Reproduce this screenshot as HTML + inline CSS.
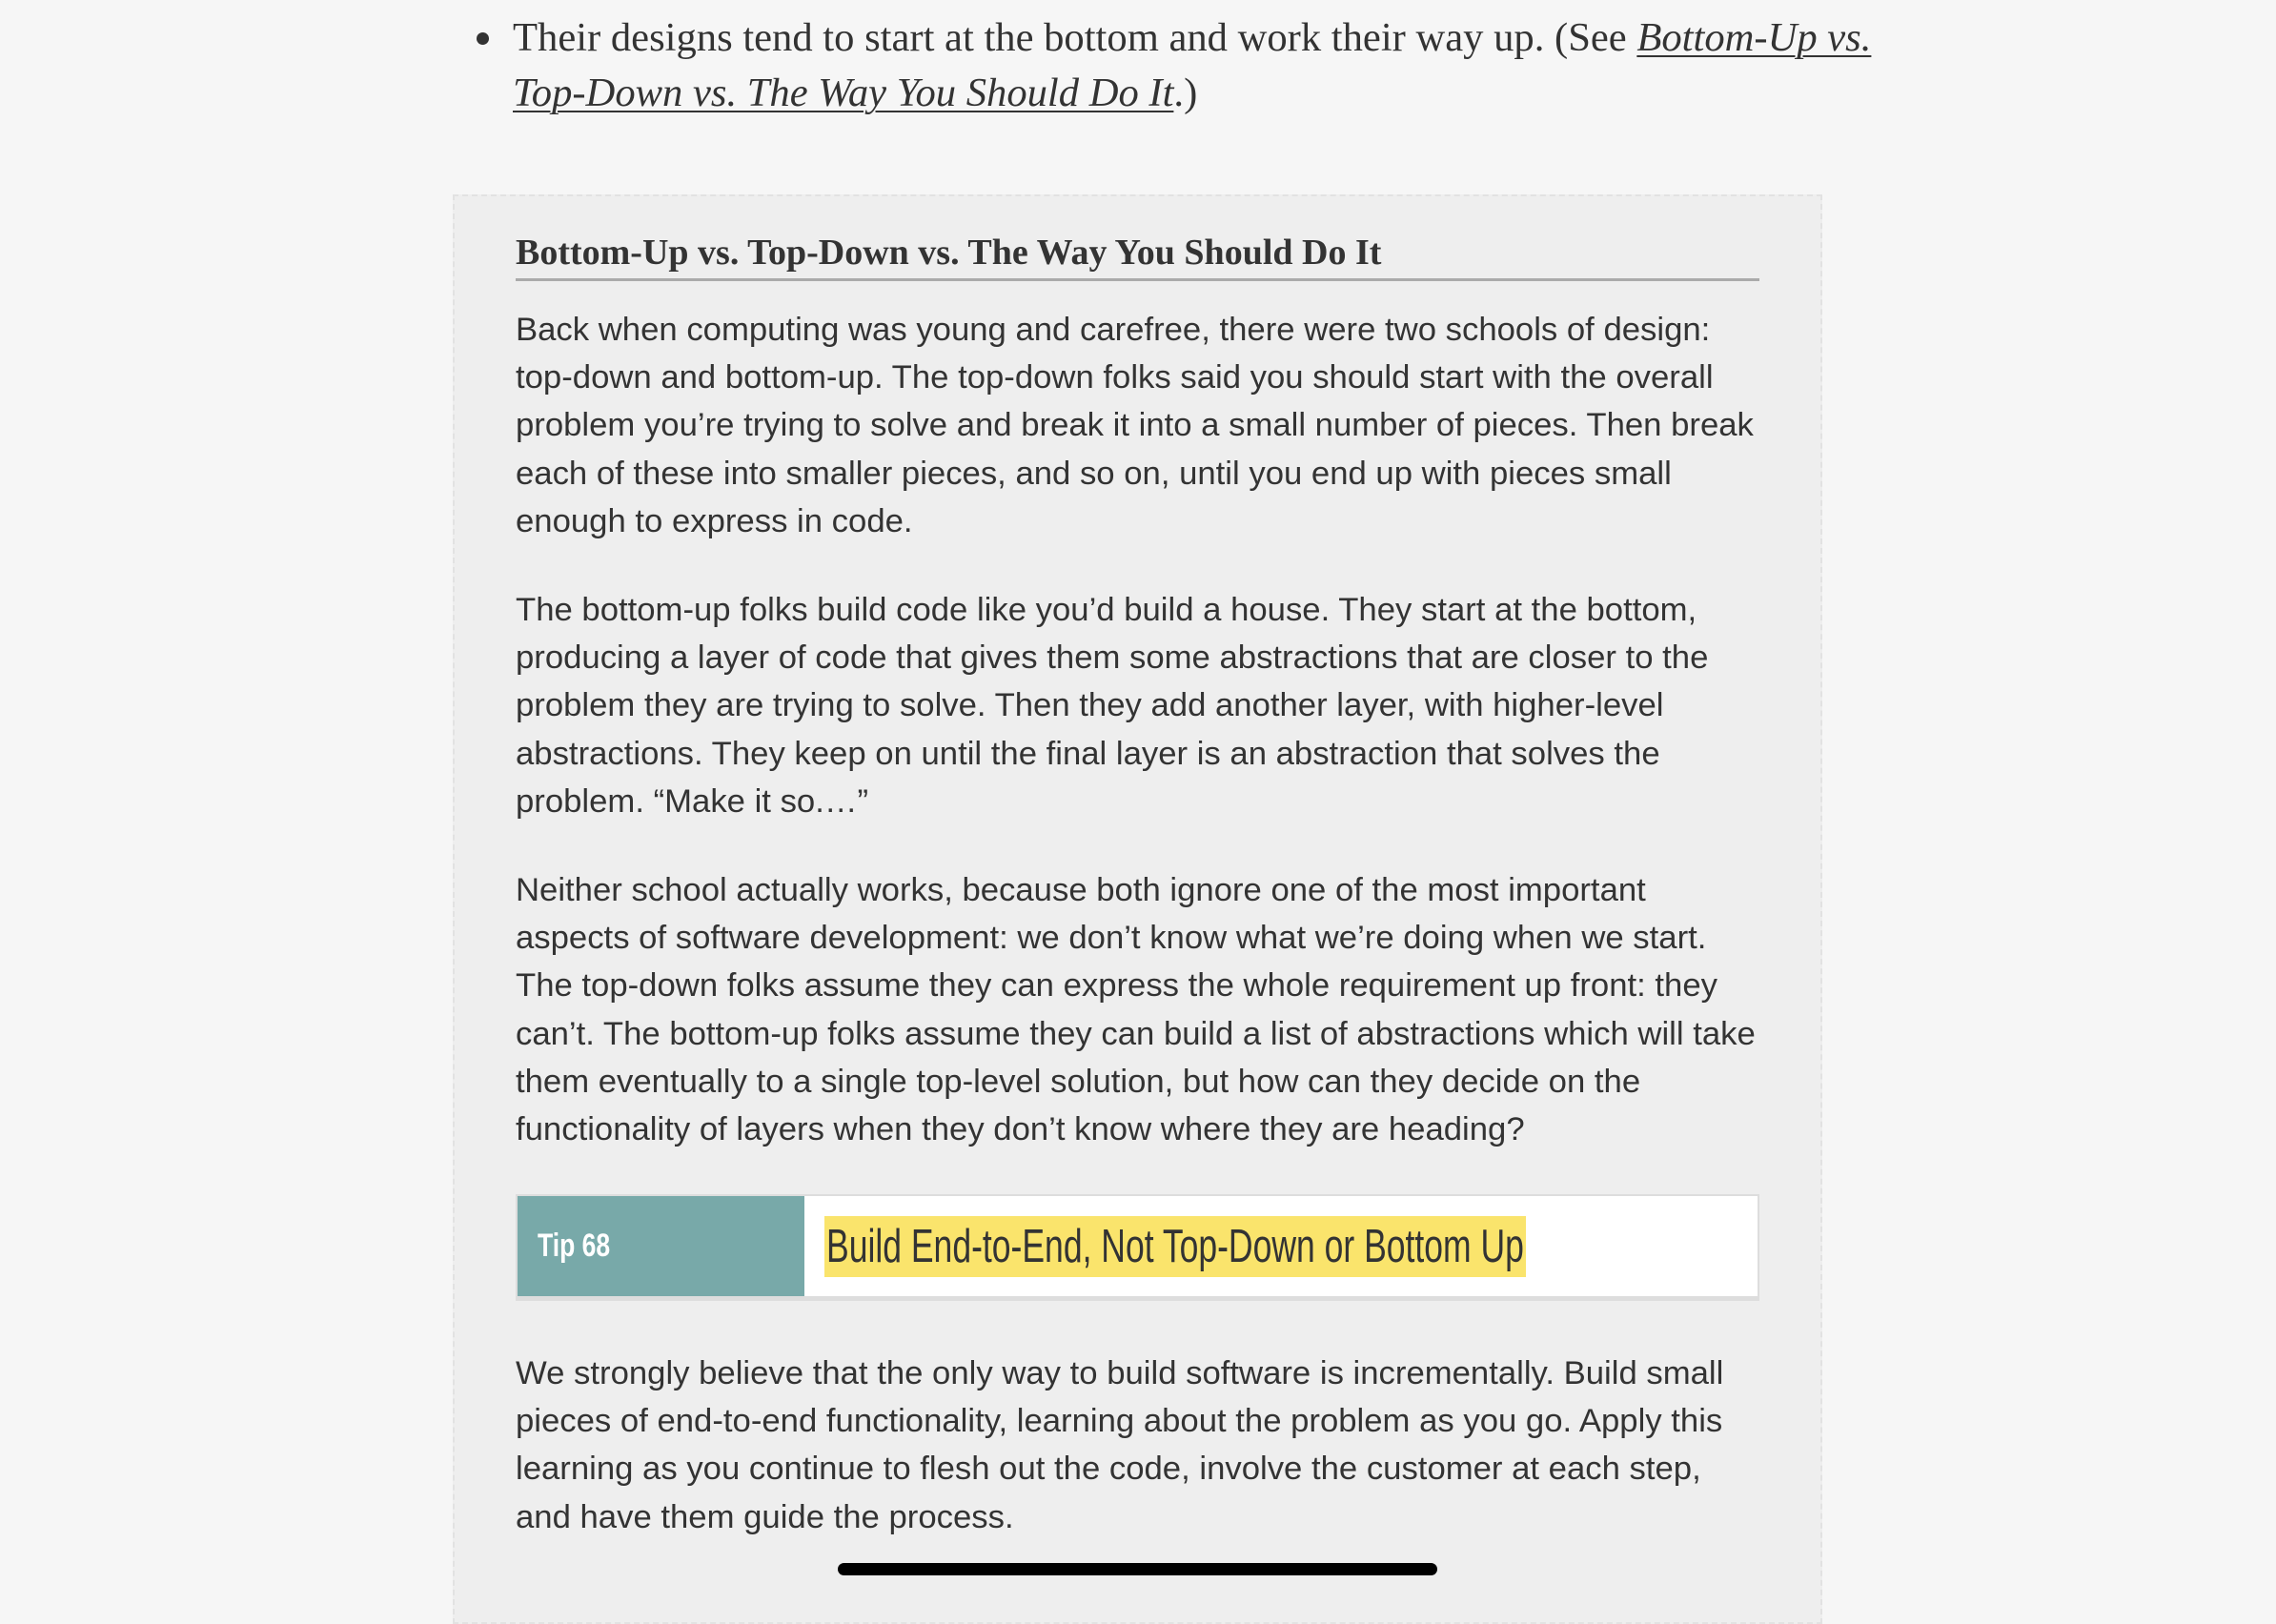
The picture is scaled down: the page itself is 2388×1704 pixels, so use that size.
<!DOCTYPE html>
<html><head><meta charset="utf-8"><style>
*{margin:0;padding:0;box-sizing:border-box}
html,body{width:2388px;height:1668px;overflow:hidden;background:#f6f6f6;color:#333}
.bul{position:absolute;left:538px;top:11px;white-space:nowrap;font-family:"Liberation Serif",serif;font-size:42.6px;line-height:58px}
.dot{position:absolute;left:500px;top:34px;width:13px;height:13px;border-radius:50%;background:#333}
.bul i{text-decoration:underline;text-decoration-thickness:2px;text-underline-offset:5px}
.box{position:absolute;left:475px;top:204px;width:1437px;height:1500px;background:#eeeeee;border:2px dashed #e2e2e2}
h2{position:absolute;left:541px;top:243px;width:1305px;white-space:nowrap;font-family:"Liberation Serif",serif;font-weight:bold;font-size:38px;line-height:44px;padding-bottom:5px;border-bottom:3px solid #aaa}
.p{position:absolute;left:541px;white-space:nowrap;font-family:"Liberation Sans",sans-serif;font-size:34.7px;line-height:50.2px;color:#333}
.tip{position:absolute;left:541px;top:1253px;width:1305px;height:112px;background:#fff;border:2px solid #ddd;border-bottom-width:5px}
.tl{position:absolute;left:0;top:0;width:301px;height:105px;background:#78a9a9}
.tl span{position:absolute;left:21px;top:0;line-height:105px;color:#fff;font-family:"Liberation Sans",sans-serif;font-weight:bold;font-size:34px;transform:scaleX(0.78);transform-origin:left center}
.hl{position:absolute;left:322px;top:21px;width:736px;height:64px;background:#fae46c;overflow:hidden}
.hl span{position:absolute;left:2px;top:0;white-space:nowrap;font-family:"Liberation Sans",sans-serif;font-size:49px;line-height:64px;color:#333;transform:scaleX(0.725);transform-origin:left center}
.bar{position:absolute;left:879px;top:1640px;width:629px;height:13px;border-radius:7px;background:#000}
</style></head><body>
<div class="dot"></div>
<div class="bul">Their designs tend to start at the bottom and work their way up. (See <i>Bottom-Up vs.</i><br><i>Top-Down vs. The Way You Should Do It</i>.)</div>
<div class="box"></div>
<h2>Bottom-Up vs. Top-Down vs. The Way You Should Do It</h2>
<div class="p" style="top:321px">Back when computing was young and carefree, there were two schools of design:<br>top-down and bottom-up. The top-down folks said you should start with the overall<br>problem you’re trying to solve and break it into a small number of pieces. Then break<br>each of these into smaller pieces, and so on, until you end up with pieces small<br>enough to express in code.</div>
<div class="p" style="top:615px">The bottom-up folks build code like you’d build a house. They start at the bottom,<br>producing a layer of code that gives them some abstractions that are closer to the<br>problem they are trying to solve. Then they add another layer, with higher-level<br>abstractions. They keep on until the final layer is an abstraction that solves the<br>problem. “Make it so.…”</div>
<div class="p" style="top:909px">Neither school actually works, because both ignore one of the most important<br>aspects of software development: we don’t know what we’re doing when we start.<br>The top-down folks assume they can express the whole requirement up front: they<br>can’t. The bottom-up folks assume they can build a list of abstractions which will take<br>them eventually to a single top-level solution, but how can they decide on the<br>functionality of layers when they don’t know where they are heading?</div>
<div class="tip"><div class="tl"><span>Tip 68</span></div><div class="hl"><span>Build End-to-End, Not Top-Down or Bottom Up</span></div></div>
<div class="p" style="top:1416px">We strongly believe that the only way to build software is incrementally. Build small<br>pieces of end-to-end functionality, learning about the problem as you go. Apply this<br>learning as you continue to flesh out the code, involve the customer at each step,<br>and have them guide the process.</div>
<div class="bar"></div>
</body></html>
